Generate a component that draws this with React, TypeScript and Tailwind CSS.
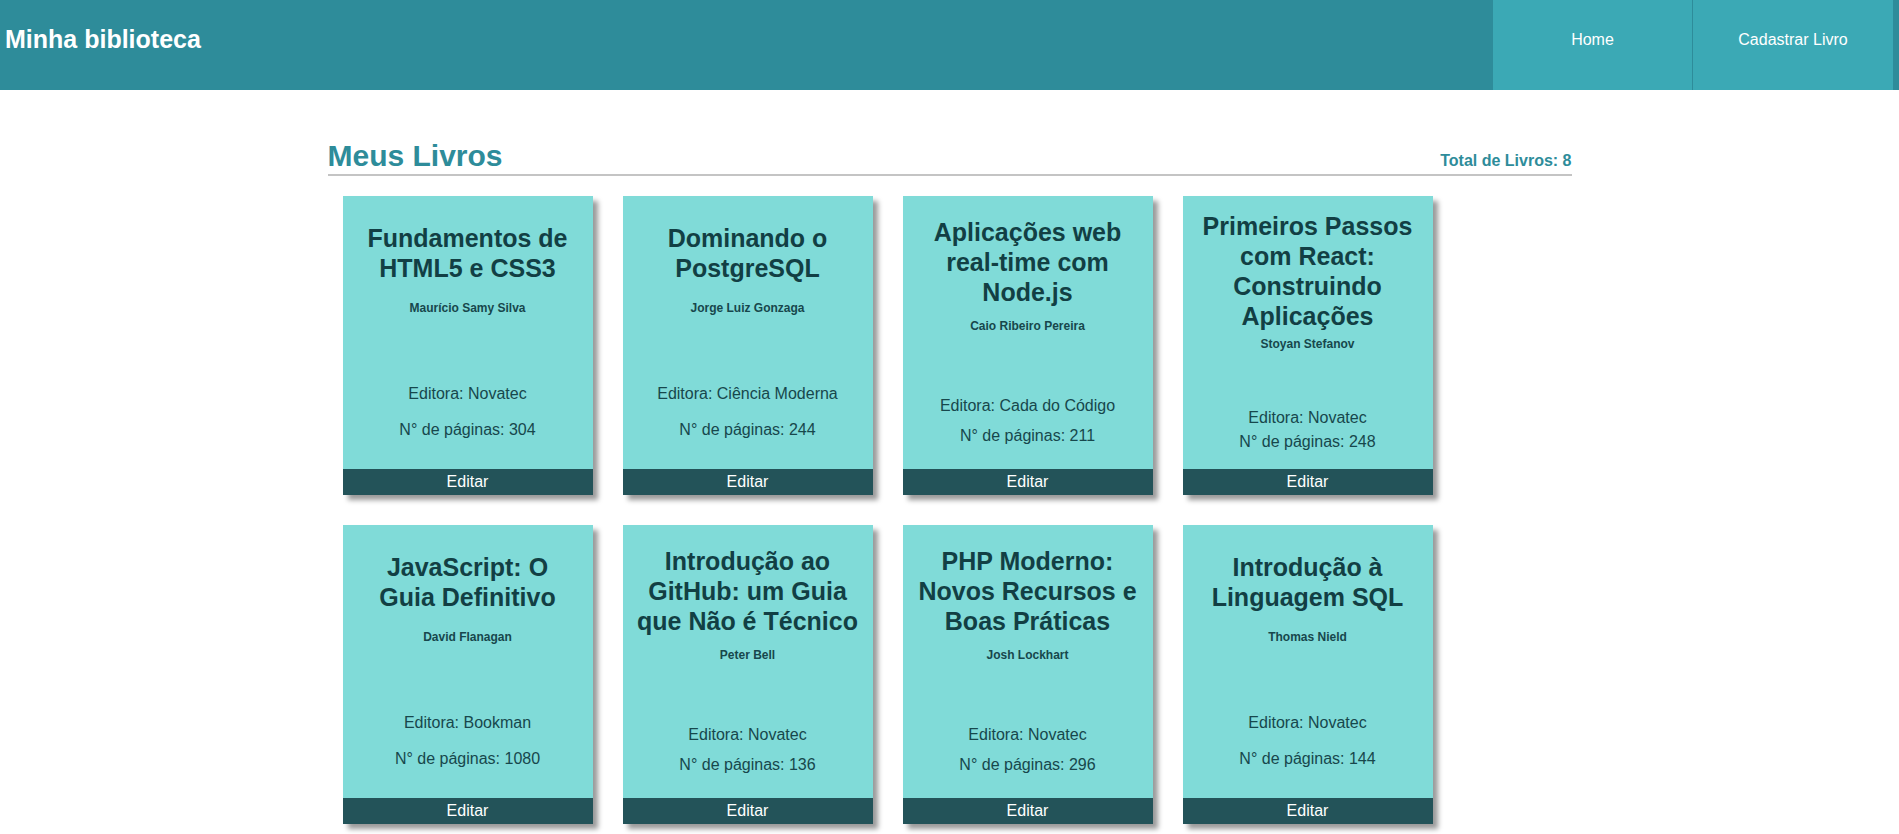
const books = [
  { title: 'Fundamentos de HTML5 e CSS3', author: 'Maurício Samy Silva', publisher: 'Novatec', pages: 304 },
  { title: 'Dominando o PostgreSQL', author: 'Jorge Luiz Gonzaga', publisher: 'Ciência Moderna', pages: 244 },
  { title: 'Aplicações web real-time com Node.js', author: 'Caio Ribeiro Pereira', publisher: 'Cada do Código', pages: 211 },
  { title: 'Primeiros Passos com React: Construindo Aplicações', author: 'Stoyan Stefanov', publisher: 'Novatec', pages: 248 },
  { title: 'JavaScript: O Guia Definitivo', author: 'David Flanagan', publisher: 'Bookman', pages: 1080 },
  { title: 'Introdução ao GitHub: um Guia que Não é Técnico', author: 'Peter Bell', publisher: 'Novatec', pages: 136 },
  { title: 'PHP Moderno: Novos Recursos e Boas Práticas', author: 'Josh Lockhart', publisher: 'Novatec', pages: 296 },
  { title: 'Introdução à Linguagem SQL', author: 'Thomas Nield', publisher: 'Novatec', pages: 144 },
];

function BookCard({ book }: { book: (typeof books)[number] }) {
  return (
    <div className="m-[15px] w-[250px] h-[299px] flex flex-col bg-[#80dbd8] shadow-[5px_5px_5px_rgba(0,0,0,0.4)]">
      <div className="h-[273px] flex flex-col justify-evenly pt-[9px] pb-[12px] text-center text-[#17474c]">
        <h2 className="w-[222px] mx-auto text-[25px] leading-[30px] font-bold text-[#123f44]">{book.title}</h2>
        <h6 className="text-[12px] leading-[14px] font-bold">{book.author}</h6>
        <p className="mt-[52px] text-[16px] leading-[18px]">Editora: {book.publisher}</p>
        <p className="text-[16px] leading-[18px]">N° de páginas: {book.pages}</p>
      </div>
      <button className="h-[26px] w-full bg-[#235359] text-white text-[16px] leading-[26px]">Editar</button>
    </div>
  );
}

export default function App() {
  return (
    <div className="min-h-screen bg-white font-['Liberation_Sans',Arial,sans-serif]">
      <header className="h-[90px] flex items-stretch justify-between bg-[#2e8c9a] pr-[6px]">
        <h1 className="pl-[5px] pb-[10px] flex items-center text-[25px] font-bold text-white">Minha biblioteca</h1>
        <nav className="flex">
          <a className="w-[200px] pb-[10px] flex items-center justify-center bg-[#3ba9b5] text-white text-[16px] border-r border-[#2e8c9a]">Home</a>
          <a className="w-[200px] pb-[10px] flex items-center justify-center bg-[#3ba9b5] text-white text-[16px]">Cadastrar Livro</a>
        </nav>
      </header>

      <main className="w-[1244px] mx-auto pt-[50px]">
        <div className="flex items-baseline justify-between border-b-2 border-[#c4c4c4] pb-[1px]">
          <h1 className="text-[30px] leading-[32px] font-bold text-[#2e8c9a]">Meus Livros</h1>
          <span className="text-[16px] font-bold text-[#2e8c9a]">Total de Livros: 8</span>
        </div>
        <div className="flex flex-wrap pt-[5px]">
          {books.map((book, i) => (
            <BookCard key={i} book={book} />
          ))}
        </div>
      </main>
    </div>
  );
}
